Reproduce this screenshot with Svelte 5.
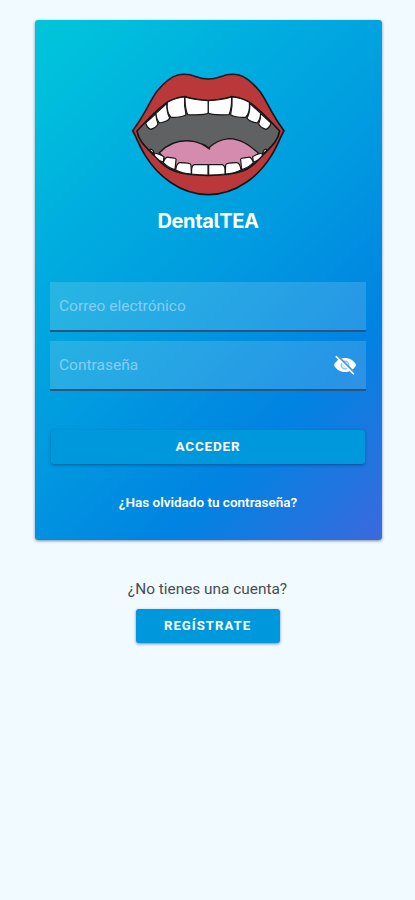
<script>
  let email = $state('');
  let password = $state('');
  let visible = $state(false);
</script>

<main>
  <section class="card">
    <svg class="logo" viewBox="30 30 470 385" aria-label="DentalTEA" role="img">
      <path class="lip" d="M38 212Q58 186 75 155C90 129 98 110 112 92C134 66 150 51 173 45C194 40 213 44 229 50Q248 57 265 57Q282 57 301 50C317 44 336 40 357 45C380 51 396 66 418 92C432 110 440 129 455 155Q472 186 492 212C478 238 470 262 454 287C418 346 350 404 265 404C180 404 112 346 76 287C60 262 52 238 38 212Z" />
      <path class="cavity" d="M51 213C83 180 113 143 150 122Q173 112 195 110C214 115 235 121 265 122C295 121 316 115 335 110Q357 112 380 122C417 143 447 180 479 213C473 247 450 263 420 294C388 332 357 345 265 346C173 345 142 332 110 294C80 263 57 247 51 213Z" />
      <path class="tongue" d="M118 278C149 246 182 238 220 244Q250 251 265 265Q290 240 326 236C368 237 392 260 416 280Q380 324 326 335H204Q150 324 118 278Z" />
      <path class="line" d="M246 252Q260 256 270 268" />
      {#each [0, 1] as side}
        <g transform={side ? 'translate(530 0) scale(-1 1)' : undefined}>
          <path class="tooth" d="M77 189L108 161Q108 178 114 192Q109 203 92 208Q81 204 77 189Z" />
          <path class="tooth" d="M108 160L141 130Q139 156 149 174Q145 184 119 189Q109 180 108 160Z" />
          <path class="tooth" d="M142 127Q170 112 194 111Q192 139 198 164Q183 173 153 172Q139 157 142 127Z" />
          <path class="tooth" d="M195 111Q225 121 265 122V159Q257 166 203 164Q195 147 195 111Z" />
          <path class="tooth" d="M88 269Q96 264 101 276L105 284L96 277Z" />
          <path class="tooth" d="M102 285Q106 274 132 290L130 306Q117 304 102 285Z" />
          <path class="tooth" d="M130 308Q136 289 147 292Q171 294 168 300L165 329Q145 323 130 308Z" />
          <path class="tooth" d="M167 330Q170 308 180 308Q212 308 213 315L214 342Q187 340 167 330Z" />
          <path class="tooth" d="M215 342Q213 316 223 314H264V345Q238 345 215 342Z" />
        </g>
      {/each}
    </svg>
    <h1>DentalTEA</h1>

    <form onsubmit={(e) => e.preventDefault()}>
      <label class="field">
        <input type="email" placeholder="Correo electrónico" bind:value={email} />
      </label>
      <label class="field second">
        <input type={visible ? 'text' : 'password'} placeholder="Contraseña" bind:value={password} />
        <button class="eye" type="button" aria-label="Mostrar contraseña" onclick={() => (visible = !visible)}>
          <svg viewBox="0 0 24 24">
            <path fill="#fff" d="M1 12C3 7.3 7.2 5 12 5S21 7.3 23 12C21 16.7 16.8 19 12 19S3 16.7 1 12Z" />
            <circle cx="12" cy="12" r="3.8" fill="#d5eafb" stroke="#8cc4f2" stroke-width="1.3" />
            <path d="M4.5 2.6L21.5 19.6" stroke="#3d99e7" stroke-width="1.7" />
            <path d="M2.8 3.2L20.8 21.2" stroke="#fff" stroke-width="1.6" />
          </svg>
        </button>
      </label>
      <button class="primary">ACCEDER</button>
    </form>
    <a href="#recuperar">¿Has olvidado tu contraseña?</a>
  </section>

  <p>¿No tienes una cuenta?</p>
  <button class="primary register">REGÍSTRATE</button>
</main>

<style>
  :global(body) { margin: 0; background: #f0faff; }
  main {
    box-sizing: border-box;
    min-height: 900px;
    padding-top: 20px;
    display: flex;
    flex-direction: column;
    align-items: center;
    background: #f0faff;
    font-family: Roboto, "Liberation Sans", sans-serif;
  }
  .card {
    box-sizing: border-box;
    width: 347px;
    height: 520px;
    margin-left: 1px;
    padding: 50px 15.5px 0;
    display: flex;
    flex-direction: column;
    align-items: center;
    border-radius: 3px;
    background: linear-gradient(135deg, #00c5d9 0%, #00c0dc 8%, #00b0df 25%, #009be0 50%, #0083e2 75%, #3c69dd 100%);
    box-shadow: 0 1px 3px rgba(0, 30, 80, 0.5);
  }
  .logo { width: 156.67px; height: 128.33px; flex: none; }
  .lip { fill: #bb383a; stroke: #101820; stroke-width: 5; }
  .cavity { fill: #606163; stroke: #151515; stroke-width: 5; }
  .tongue { fill: #d58bae; stroke: #171717; stroke-width: 4; }
  .line { fill: none; stroke: #171717; stroke-width: 4; }
  .tooth { fill: #fff; stroke: #171717; stroke-width: 3.5; stroke-linejoin: round; }
  h1 {
    margin: 9.5px 0 0;
    font: 700 20px/26px Inter, Roboto, sans-serif;
    font-feature-settings: "cv05";
    letter-spacing: -0.4px;
    color: #fff;
  }
  form { width: 100%; margin-top: 48px; display: flex; flex-direction: column; }
  .field {
    box-sizing: border-box;
    height: 50px;
    display: flex;
    align-items: center;
    padding: 0 9px;
    background: rgba(255, 255, 255, 0.15);
    border-bottom: 2px solid #2b557d;
  }
  .second { margin-top: 9px; }
  input {
    flex: 1;
    min-width: 0;
    padding: 0;
    border: 0;
    outline: 0;
    background: none;
    color: #fff;
    font: 400 15.5px/20px Roboto, sans-serif;
  }
  input::placeholder { color: #86cdf3; opacity: 1; }
  .eye { width: 24px; height: 24px; padding: 0; border: 0; background: none; }
  .eye svg { display: block; width: 24px; height: 24px; }
  .primary {
    height: 34px;
    margin: 39.5px 1px 0;
    padding: 0 0 1px;
    border: 0;
    border-radius: 3px;
    background: #0098dc;
    box-shadow: 0 1px 3px rgba(0, 30, 70, 0.5);
    color: #fff;
    font: 700 13.5px/33px Roboto, sans-serif;
    letter-spacing: 0.8px;
  }
  a {
    margin-top: 29px;
    color: #fff;
    text-decoration: none;
    font-size: 13.5px;
    line-height: 18px;
    font-weight: 600;
  }
  p { margin: 39px 0 0; color: #484d50; font-size: 15.4px; line-height: 20px; }
  .register { width: 144px; margin-top: 10px; padding: 0; font-size: 13.2px; line-height: 34px; letter-spacing: 1px; }
</style>
